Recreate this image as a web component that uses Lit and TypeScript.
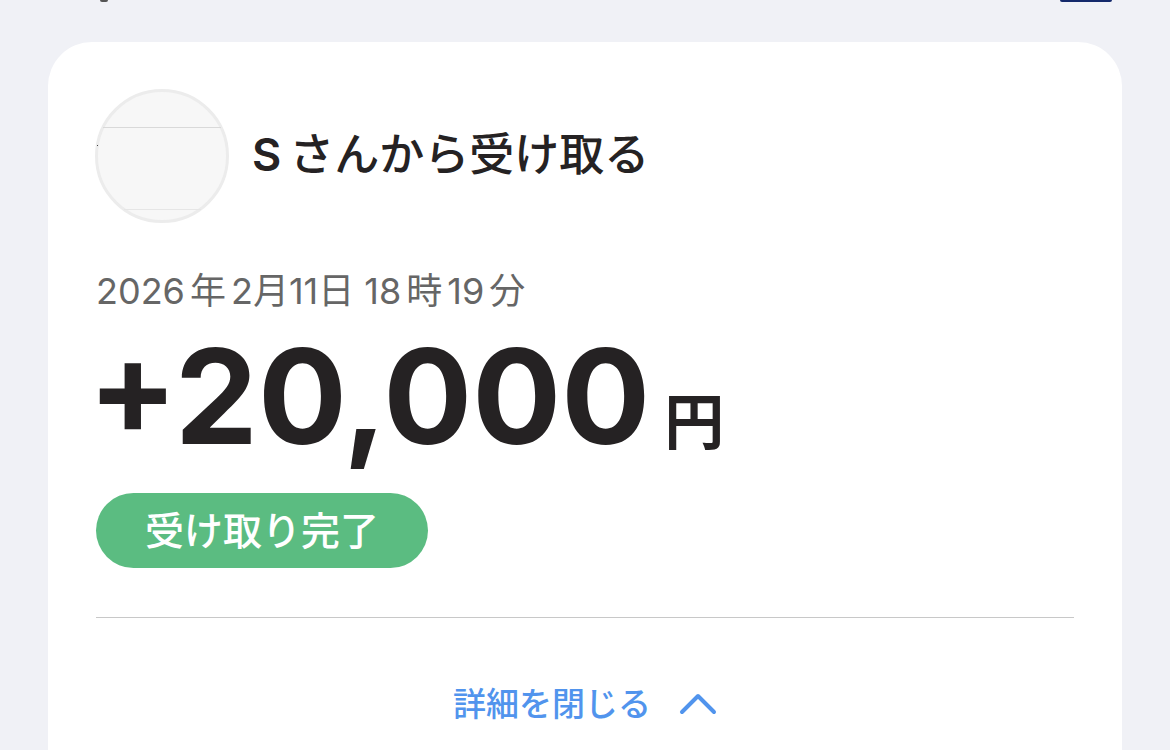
import { LitElement, html, css } from "lit";
import { customElement } from "lit/decorators.js";

@customElement("app-root")
export class AppRoot extends LitElement {
  static styles = css`
    * { box-sizing: border-box; }
    :host {
      display: block;
      min-height: 100vh;
      overflow: hidden;
      background: #f0f1f6;
      color: #252223;
      font-family: Inter, "Noto Sans CJK JP", sans-serif;
    }
    .page { height: 100vh; overflow: hidden; display: flex; flex-direction: column; padding: 0 48px; }
    .top { height: 42px; flex: none; display: flex; justify-content: space-between; align-items: flex-start; padding: 0 10px 0 52px; }
    .mark { width: 8px; height: 2px; background: #555; border-radius: 0 0 4px 4px; }
    .tab { width: 52px; height: 2px; background: #14296b; border-radius: 0 0 4px 4px; }
    .card { flex: 1 0 auto; background: #fff; border-radius: 44px 44px 0 0; padding: 47px 48px 0; }
    .sender { display: flex; align-items: center; gap: 22px; }
    .avatar { width: 134px; height: 134px; flex: none; overflow: visible; }
    .name { margin: 0; padding-bottom: 2px; font-size: 45px; line-height: 64px; font-weight: 500; }
    .initial { margin-right: 8px; font-weight: 600; }
    .date { margin: 44px 0 0; font-size: 36px; line-height: 48px; color: #666; }
    .part { margin: 0 5px; }
    .amount { margin: 16px 0 0; display: flex; align-items: baseline; gap: 14px; font-weight: 700; line-height: 130px; }
    .value { margin-left: -8px; font-size: 132px; }
    .unit { font-size: 60px; }
    .status { display: block; width: fit-content; margin-top: 6px; padding: 0 49px; border-radius: 38px; background: #5bbc81; color: #fff; font-size: 39px; font-weight: 500; line-height: 75px; }
    .line { border: 0; border-top: 1px solid #c8c8c8; margin: 49px 0 0; }
    .toggle { display: flex; align-items: center; justify-content: center; gap: 28px; width: 100%; margin-top: 62px; padding: 0; border: 0; background: none; color: #5194ed; font: inherit; font-size: 33px; font-weight: 500; line-height: 48px; }
  `;

  render() {
    return html`
      <main class="page">
        <div class="top"><span class="mark"></span><span class="tab"></span></div>
        <section class="card">
          <header class="sender">
            <svg class="avatar" viewBox="0 0 134 134" aria-hidden="true">
              <circle cx="66" cy="67" r="65.5" fill="#f7f7f7" stroke="#ececec" stroke-width="3" />
              <path d="M7 38.5H125" stroke="#d9d9d9" />
              <path d="M28 120.5H105" stroke="#e6e6e6" />
              <path d="M1 56.5H2" stroke="#444" />
            </svg>
            <h1 class="name"><span class="initial">S</span>さんから受け取る</h1>
          </header>
          <p class="date">2026<span class="part">年</span>2月11日 18<span class="part">時</span>19<span class="part">分</span></p>
          <div class="amount"><span class="value">+20,000</span><span class="unit">円</span></div>
          <div class="status">受け取り完了</div>
          <hr class="line" />
          <button class="toggle" type="button" aria-expanded="true">
            詳細を閉じる
            <svg width="38" height="24" viewBox="0 0 38 24" fill="none" aria-hidden="true"><path d="M3 20L19 4L35 20" stroke="currentColor" stroke-width="4" stroke-linecap="round" stroke-linejoin="round" /></svg>
          </button>
        </section>
      </main>
    `;
  }
}
